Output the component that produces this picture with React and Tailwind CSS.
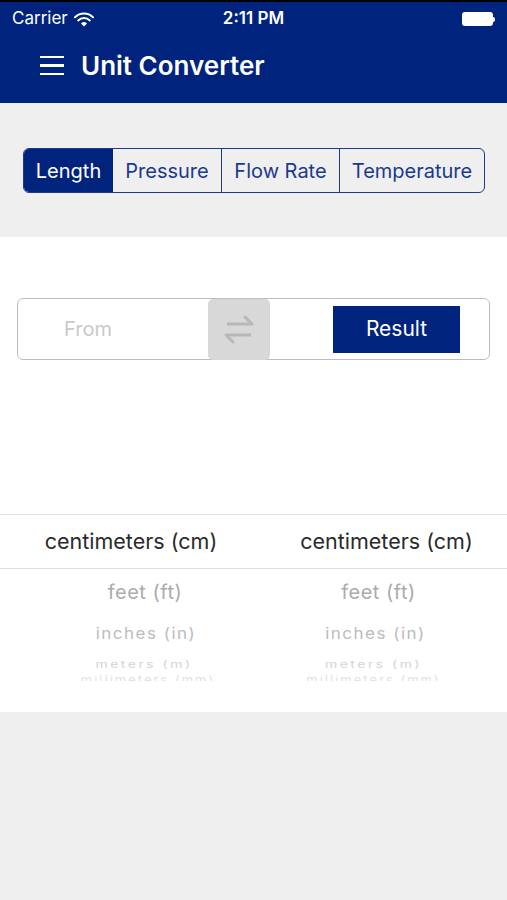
const blue = "bg-[#00247d]";

const Wifi = () => (
  <svg width="20" height="15" viewBox="0 0 20 15" fill="none">
    <path d="M1 5.2a13 13 0 0 1 18 0" stroke="white" strokeWidth="2" strokeLinecap="round" />
    <path d="M4.2 8.4a8.5 8.5 0 0 1 11.6 0" stroke="white" strokeWidth="2" strokeLinecap="round" />
    <path d="M10 14.5l-3-3a4.3 4.3 0 0 1 6 0z" fill="white" />
  </svg>
);

const Battery = () => (
  <div className="flex items-center">
    <div className="w-[31px] h-[14px] rounded-[3px] bg-white" />
    <div className="w-[2px] h-[5px] bg-white rounded-r-sm" />
  </div>
);

const SwapIcon = () => (
  <svg width="40" height="36" viewBox="0 0 40 36" fill="none" stroke="#b8b8b8" strokeWidth="3">
    <path d="M8 13h24" />
    <path d="M26 6l7 7" strokeLinecap="round" />
    <path d="M32 24H8" />
    <path d="M14 31l-7-7" strokeLinecap="round" />
  </svg>
);

const tabs = ["Length", "Pressure", "Flow Rate", "Temperature"];

export default function App() {
  return (
    <div className="w-[507px] h-[900px] bg-[#efefef] flex flex-col" style={{ fontFamily: "Inter, 'Liberation Sans', sans-serif" }}>
      {/* status bar + nav */}
      <div className={`${blue} h-[103px] border-t-2 border-black text-white flex flex-col`}>
        <div className="h-[34px] flex items-center justify-between px-3 relative">
          <div className="flex items-center gap-[6px] text-[17px]">
            <span>Carrier</span>
            <Wifi />
          </div>
          <span className="absolute left-1/2 -translate-x-1/2 text-[17px] font-semibold">2:11 PM</span>
          <Battery />
        </div>
        <div className="flex items-center pl-[40px] mt-[10px] gap-[17px]">
          <div className="flex flex-col gap-[6px]">
            <div className="w-[24px] h-[2.5px] bg-white" />
            <div className="w-[24px] h-[2.5px] bg-white" />
            <div className="w-[24px] h-[2.5px] bg-white" />
          </div>
          <span className="text-[26px] font-semibold">Unit Converter</span>
        </div>
      </div>

      {/* segmented control */}
      <div className="h-[134px] flex items-start pt-[45px] pl-[23px]">
        <div className="flex h-[45px] border-[1.5px] border-[#1c3a8c] rounded-[6px] overflow-hidden text-[20px]">
          {tabs.map((t, i) => (
            <div
              key={t}
              className={`flex items-center justify-center ${i === 0 ? "bg-[#00247d] text-white w-[89px]" : "text-[#1c3a8c]"} ${i === 1 ? "w-[108px]" : ""} ${i === 2 ? "w-[118px]" : ""} ${i === 3 ? "w-[145px]" : ""} ${i > 1 ? "border-l-[1.5px] border-[#1c3a8c]" : ""}`}
            >
              {t}
            </div>
          ))}
        </div>
      </div>

      {/* white panel */}
      <div className="bg-white h-[475px] flex flex-col">
        <div className="mt-[61px] mx-[17px] h-[62px] border-[1.5px] border-[#bdbdbd] rounded-[6px] flex items-center">
          <span className="w-[190px] pl-[46px] text-[20px] text-[#c9c9c9]">From</span>
          <div className="w-[62px] h-[61px] bg-[#d8d8d8] rounded-[5px] flex items-center justify-center">
            <SwapIcon />
          </div>
          <div className="flex-1 flex justify-end pr-[29px]">
            <div className={`${blue} w-[127px] h-[47px] flex items-center justify-center text-white text-[21px]`}>
              Result
            </div>
          </div>
        </div>

        {/* picker */}
        <div className="mt-[154px] border-t-[1.5px] border-[#e0e0e0]">
          <div className="h-[54px] flex items-center text-[21.5px] text-[#2a2a2a] border-b-[1.5px] border-[#e0e0e0]">
            <div className="w-[262px] text-center">centimeters (cm)</div>
            <div className="flex-1 text-center pl-[4px]">centimeters (cm)</div>
          </div>
          <div className="h-[46px] flex items-center text-[20px] text-[#ababab] tracking-[0.5px]">
            <div className="w-[290px] text-center">feet (ft)</div>
            <div className="flex-1 text-center pr-[40px]">feet (ft)</div>
          </div>
          <div className="h-[38px] flex items-center text-[17px] text-[#bcbcbc] tracking-[1.5px]" style={{ transform: "scaleY(0.92)" }}>
            <div className="w-[292px] text-center">inches (in)</div>
            <div className="flex-1 text-center pr-[48px]">inches (in)</div>
          </div>
          <div className="h-[22px] flex items-center text-[14px] text-[#d4d4d4] tracking-[2.5px]" style={{ transform: "scaleY(0.7)" }}>
            <div className="w-[288px] text-center">meters (m)</div>
            <div className="flex-1 text-center pr-[48px]">meters (m)</div>
          </div>
          <div className="h-[6px] overflow-hidden flex items-start text-[13px] text-[#e2e2e2] tracking-[2px] leading-[10px]">
            <div className="w-[296px] text-center">millimeters (mm)</div>
            <div className="flex-1 text-center pr-[56px]">millimeters (mm)</div>
          </div>
        </div>
      </div>

      <div className="flex-1" />
    </div>
  );
}
